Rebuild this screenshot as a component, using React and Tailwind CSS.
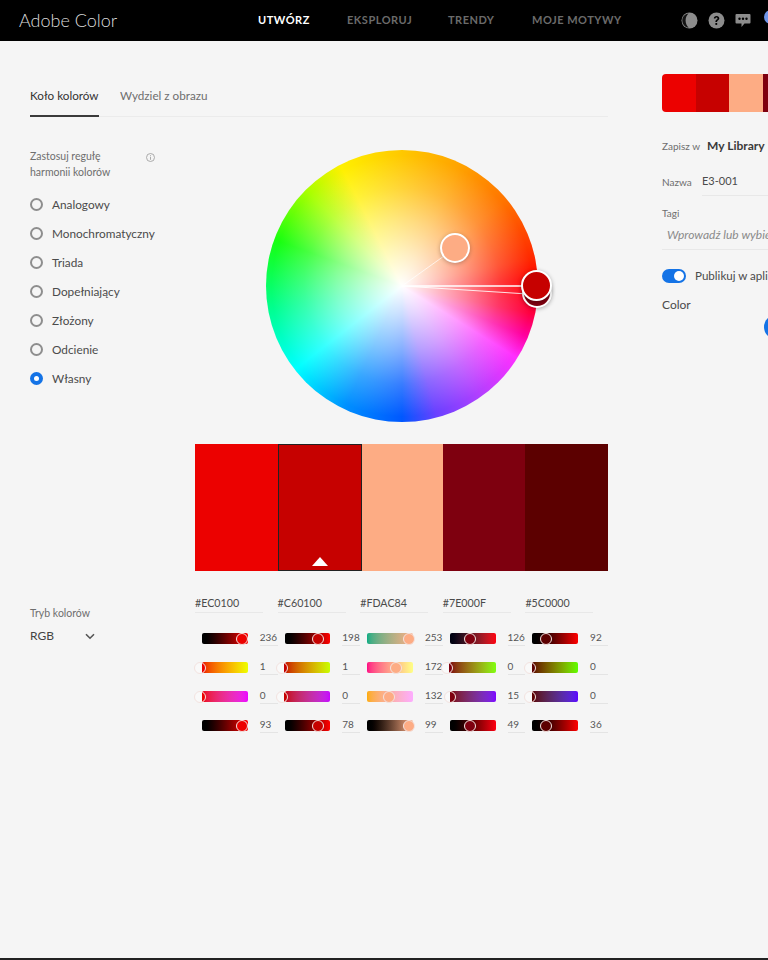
const font = { fontFamily: '"Lato", "Noto Sans", sans-serif' };

const rules = ['Analogowy', 'Monochromatyczny', 'Triada', 'Dopełniający', 'Złożony', 'Odcienie', 'Własny'];
const swatches = [
  { cls: 'bg-[#ec0100]' },
  { cls: 'bg-[#c60100] border border-[#222]', selected: true },
  { cls: 'bg-[#fdac84]' },
  { cls: 'bg-[#7e000f]' },
  { cls: 'bg-[#5c0000]' },
];

const columns = [
  {
    hex: '#EC0100',
    rows: [
      { v: 236, x: 40, c: '#ec0100', g: 'from-[#000] to-[#ff0100]' },
      { v: 1, x: -2.5, c: '#ec0100', g: 'from-[#ec0100] to-[#ecff00]' },
      { v: 0, x: -2.5, c: '#ec0100', g: 'from-[#ec0100] to-[#ec01ff]' },
      { v: 93, x: 40, c: '#ec0100', g: 'from-[#000] to-[#ff0100]' },
    ],
  },
  {
    hex: '#C60100',
    rows: [
      { v: 198, x: 33, c: '#c60100', g: 'from-[#000] to-[#ff0100]' },
      { v: 1, x: -2.5, c: '#c60100', g: 'from-[#c60100] to-[#c6ff00]' },
      { v: 0, x: -2.5, c: '#c60100', g: 'from-[#c60100] to-[#c601ff]' },
      { v: 78, x: 33, c: '#c60100', g: 'from-[#000] to-[#ff0100]' },
    ],
  },
  {
    hex: '#FDAC84',
    rows: [
      { v: 253, x: 42, c: '#fdac84', g: 'from-[#00ac84] to-[#fdac84]' },
      { v: 172, x: 29, c: '#fdac84', g: 'from-[#fd0084] to-[#fdff84]' },
      { v: 132, x: 22, c: '#fdac84', g: 'from-[#fdac00] to-[#fdacff]' },
      { v: 99, x: 42, c: '#fdac84', g: 'from-[#000] to-[#fdac84]' },
    ],
  },
  {
    hex: '#7E000F',
    rows: [
      { v: 126, x: 20, c: '#7e000f', g: 'from-[#00000f] to-[#ff000f]' },
      { v: 0, x: -2.5, c: '#7e000f', g: 'from-[#7e000f] to-[#7eff0f]' },
      { v: 15, x: 0, c: '#7e000f', g: 'from-[#7e0000] to-[#7e00ff]' },
      { v: 49, x: 20, c: '#7e000f', g: 'from-[#000] to-[#ff0012]' },
    ],
  },
  {
    hex: '#5C0000',
    rows: [
      { v: 92, x: 14, c: '#5c0000', g: 'from-[#000] to-[#ff0000]' },
      { v: 0, x: -2.5, c: '#5c0000', g: 'from-[#5c0000] to-[#5cff00]' },
      { v: 0, x: -2.5, c: '#5c0000', g: 'from-[#5c0000] to-[#5c00ff]' },
      { v: 36, x: 14, c: '#5c0000', g: 'from-[#000] to-[#ff0000]' },
    ],
  },
];

function Slider({ v, x, c, g }) {
  const split = ((6 - x) / 12) * 100;
  const fill = x <= 3
    ? { background: `linear-gradient(90deg,#f9f9f9 ${split}%,${c} ${split}%)` }
    : { backgroundColor: c };
  return (
    <div className="flex items-center h-[29px] pl-[7px]">
      <div className={`relative w-[46px] h-[11px] rounded-[2px] bg-linear-to-r ${g}`}>
        <div
          className="absolute top-[-0.5px] w-[12px] h-[12px] rounded-full border border-[#f3e3e0] -translate-x-1/2"
          style={{ left: x, ...fill }}
        />
      </div>
      <div className="ml-[12px] w-[18px] h-[15px] border-b border-[#e4e4e4] text-[10px] leading-[13px] text-[#555]">{v}</div>
    </div>
  );
}

function Wheel() {
  return (
    <div className="relative w-[272px] h-[272px] mx-auto">
      <div className="absolute inset-0 rounded-full bg-[conic-gradient(#ffc800_0deg,#ffa400_25deg,#ff7400_50deg,#ff2800_78deg,#ff0000_88deg,#ff0040_102deg,#ff00a0_112deg,#ff30ff_122deg,#b040ff_145deg,#6a40ff_165deg,#0058ff_180deg,#0090ff_205deg,#00ffff_232deg,#00ff90_260deg,#18ff10_290deg,#a8ff00_315deg,#fff000_333deg,#ffc800_360deg)]" />
      <div className="absolute inset-0 rounded-full bg-[radial-gradient(circle_closest-side,#ffffff_0%,rgba(255,255,255,0.78)_22%,rgba(255,255,255,0.5)_48%,rgba(255,255,255,0.22)_72%,rgba(255,255,255,0)_96%)]" />
      <svg className="absolute inset-0 overflow-visible" width="272" height="272">
        <line x1="136" y1="136" x2="178" y2="106" stroke="#ffffff" strokeOpacity="0.7" strokeWidth="1" />
        <line x1="136" y1="136" x2="262" y2="144" stroke="#ffffff" strokeOpacity="0.85" strokeWidth="1" />
        <line x1="136" y1="136" x2="262" y2="136" stroke="#ffffff" strokeWidth="1.5" />
      </svg>
      <div className="absolute left-[256px] top-[128px] w-[30px] h-[30px] rounded-full bg-[#7e000f] border-2 border-white shadow-[0_1px_4px_rgba(0,0,0,0.3)]" />
      <div className="absolute left-[255px] top-[120px] w-[31px] h-[31px] rounded-full bg-[#c60100] border-2 border-white shadow-[0_1px_4px_rgba(0,0,0,0.3)]" />
      <div className="absolute left-[174px] top-[83px] w-[30px] h-[30px] rounded-full bg-[#fdac84] border-2 border-white shadow-[0_1px_4px_rgba(0,0,0,0.25)]" />
    </div>
  );
}

export default function App() {
  return (
    <div style={font} className="relative w-[768px] h-[960px] overflow-hidden bg-[#f5f5f5] flex flex-col text-[#444]">
      <header className="h-[41px] shrink-0 bg-black flex items-center">
        <div className="ml-[19px] w-[239px] shrink-0 text-[18px] font-light text-[#dcdcdc] whitespace-nowrap">Adobe Color</div>
        <nav className="flex shrink-0 text-[11px] font-bold tracking-[0.5px] text-[#6b6b6b] whitespace-nowrap">
          <span className="w-[89px] text-white">UTWÓRZ</span>
          <span className="w-[101px]">EKSPLORUJ</span>
          <span className="w-[84px]">TRENDY</span>
          <span className="w-[149px]">MOJE MOTYWY</span>
        </nav>
        <div className="flex items-center gap-[10px] shrink-0">
          <svg width="17" height="17" viewBox="0 0 17 17">
            <circle cx="8.5" cy="8.5" r="8" fill="#8c8c8c" />
            <path d="M7.5 1.4C3.9 1.7 1.3 4.8 1.3 8.5s2.7 6.9 6.4 7.1c-1.9-1.6-3.1-4.2-3.1-7.1S5.7 3 7.5 1.4Z" fill="#141414" />
          </svg>
          <svg width="17" height="17" viewBox="0 0 17 17">
            <circle cx="8.5" cy="8.5" r="8" fill="#8c8c8c" />
            <path d="M5.8 6.5c0-1.6 1.2-2.6 2.8-2.6s2.7 1 2.7 2.4c0 1.1-.6 1.7-1.4 2.3-.6.4-.8.7-.8 1.4H7.4c0-1.2.4-1.8 1.2-2.4.6-.4.9-.7.9-1.2s-.4-.9-1-.9-1 .4-1 1H5.8Z" fill="#000" />
            <rect x="7.4" y="11" width="1.8" height="1.9" fill="#000" />
          </svg>
          <svg width="16" height="15" viewBox="0 0 16 15">
            <path d="M1.5 1h13a1 1 0 0 1 1 1v7.5a1 1 0 0 1-1 1H9.5L6.5 14v-3.5h-5a1 1 0 0 1-1-1V2a1 1 0 0 1 1-1Z" fill="#8c8c8c" />
            <circle cx="4.5" cy="5.7" r="1.2" fill="#000" />
            <circle cx="8" cy="5.7" r="1.2" fill="#000" />
            <circle cx="11.5" cy="5.7" r="1.2" fill="#000" />
          </svg>
          <div className="ml-[3px] w-[16px] h-[14px] rounded-[8px] bg-[#6f96ea] -mt-[7px] shrink-0" />
        </div>
      </header>

      <main className="flex-1 flex min-h-0 pl-[30px] gap-[54px]">
        <section className="w-[578px] shrink-0">
          <div className="mt-[46px] h-[30px] flex border-b border-[#ebebeb] text-[11.7px] leading-[16px]">
            <div className="w-[69px] h-[30px] border-b-2 border-[#3a3a3a] text-[#333] whitespace-nowrap">Koło kolorów</div>
            <div className="ml-[21px] text-[#6e6e6e] whitespace-nowrap">Wydziel z obrazu</div>
          </div>

          <div className="flex mt-[33px]">
            <aside className="w-[165px] shrink-0 -mt-[2px]">
              <div className="flex items-start w-[125px] justify-between text-[10.5px] leading-[16px] text-[#6e6e6e]">
                <span>Zastosuj regułę<br />harmonii kolorów</span>
                <svg className="mt-[5px]" width="9" height="9" viewBox="0 0 9 9">
                  <circle cx="4.5" cy="4.5" r="4" fill="none" stroke="#999" strokeWidth="0.8" />
                  <rect x="4.1" y="3.8" width="0.8" height="3" fill="#999" />
                  <rect x="4.1" y="2.2" width="0.8" height="0.9" fill="#999" />
                </svg>
              </div>
              <ul className="mt-[10px] flex flex-col text-[11.8px] text-[#4b4b4b]">
                {rules.map((r, i) =>
                  <li key={r} className="h-[29px] flex items-center whitespace-nowrap">
                    {i === 6
                      ? <span className="w-[13px] h-[13px] rounded-full bg-[#1473e6] flex items-center justify-center"><span className="w-[5px] h-[5px] rounded-full bg-white" /></span>
                      : <span className="w-[13px] h-[13px] rounded-full border-2 border-[#8e8e8e]" />}
                    <span className="ml-[9px]">{r}</span>
                  </li>
                )}
              </ul>
            </aside>

            <div className="w-[413px] shrink-0">
              <Wheel />
              <div className="mt-[22px] h-[127px] grid grid-cols-[83px_84px_81px_82px_83px]">
                {swatches.map((s, i) =>
                  <div key={i} className={`relative ${s.cls}`}>
                    {s.selected && <div className="absolute left-1/2 bottom-[4px] -translate-x-1/2 w-0 h-0 border-x-[8px] border-x-transparent border-b-[9px] border-b-white" />}
                  </div>
                )}
              </div>
            </div>
          </div>

          <div className="flex mt-[24px]">
            <div className="w-[165px] shrink-0 pt-[11px]">
              <div className="text-[10.5px] leading-[14px] text-[#6e6e6e]">Tryb kolorów</div>
              <div className="mt-[8px] w-[65px] flex items-center justify-between text-[12px] leading-[16px] text-[#444]">
                <span>RGB</span>
                <svg width="10" height="7" viewBox="0 0 10 7"><path d="M1 1.2 5 5.2 9 1.2" fill="none" stroke="#555" strokeWidth="1.6" /></svg>
              </div>
            </div>
            <div className="w-[413px] grid grid-cols-5">
              {columns.map((col) =>
                <div key={col.hex}>
                  <div className="w-[68px] h-[18px] pt-[1px] mb-[11px] border-b border-[#e8e8e8] text-[10.7px] leading-[14px] text-[#4b4b4b]">{col.hex}</div>
                  {col.rows.map((r, i) => <Slider key={i} {...r} />)}
                </div>
              )}
            </div>
          </div>
        </section>

        <aside className="w-[300px] shrink-0 whitespace-nowrap">
          <div className="mt-[33px] h-[38px] flex rounded-[4px] overflow-hidden">
            <div className="w-[34px] bg-[#ec0100]" />
            <div className="w-[33px] bg-[#c60100]" />
            <div className="w-[34px] bg-[#fdac84]" />
            <div className="w-[34px] bg-[#7e000f]" />
            <div className="w-[34px] bg-[#5c0000]" />
          </div>
          <div className="mt-[26px] flex items-center h-[16px]">
            <span className="w-[45px] text-[10px] text-[#6e6e6e]">Zapisz w</span>
            <span className="text-[12px] font-bold text-[#3a3a3a]">My Library</span>
          </div>
          <div className="mt-[18px] flex items-center h-[20px]">
            <span className="w-[40px] text-[10px] text-[#6e6e6e]">Nazwa</span>
            <span className="flex-1 h-[28px] flex items-center border-b border-[#e8e8e8] text-[11px] text-[#4b4b4b]">E3-001</span>
          </div>
          <div className="mt-[14px] text-[10px] leading-[14px] text-[#6e6e6e]">Tagi</div>
          <div className="mt-[5px] h-[25px] pl-[5px] border-b border-[#e8e8e8] text-[12px] italic text-[#8a8a8a] leading-[20px]">Wprowadź lub wybierz tagi</div>
          <div className="mt-[19px] flex items-center h-[14px]">
            <span className="w-[24px] h-[14px] rounded-full bg-[#1473e6] flex items-center justify-end pr-[2px]"><span className="w-[10px] h-[10px] rounded-full bg-white" /></span>
            <span className="ml-[9px] text-[11.6px] text-[#4b4b4b]">Publikuj w aplikacji</span>
          </div>
          <div className="mt-[14px] text-[12px] leading-[16px] text-[#4b4b4b]">Color</div>
          <div className="mt-[2px] ml-[102px] w-[24px] h-[24px] rounded-full bg-[#1473e6]" />
        </aside>
      </main>

      <footer className="h-[2px] shrink-0 bg-[#222]" />
    </div>
  );
}
